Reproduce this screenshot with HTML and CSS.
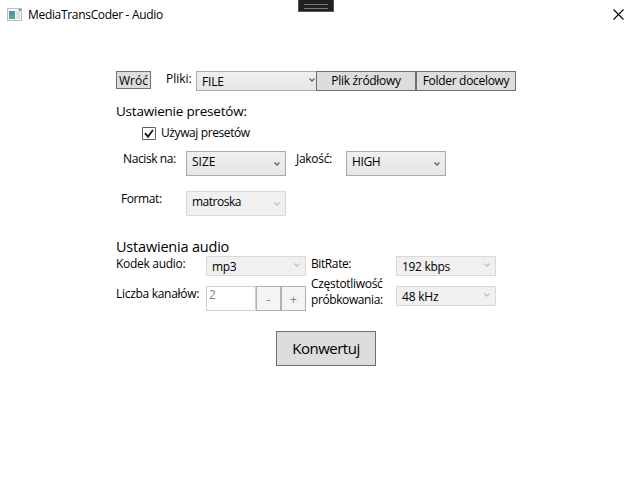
FILE: index.html
```html
<!DOCTYPE html>
<html lang="pl">
<head>
<meta charset="utf-8">
<title>MediaTransCoder - Audio</title>
<link rel="stylesheet" href="styles.css">
</head>
<body>
<header class="titlebar">
  <svg class="app-icon" width="15" height="13" viewBox="0 0 15 13"><defs><linearGradient id="g" x2="0.6" y2="1"><stop stop-color="#4c83b8"/><stop offset="1" stop-color="#5cae82"/></linearGradient></defs><path fill="#b9bec5" d="M0 0h15v13H0z"/><path fill="#f5f6f8" d="M1 2h13v10H1z"/><path fill="url(#g)" d="M2 3h6v8H2z"/><path fill="#dfe2e6" d="M9 3h4v8H9z"/><path fill="#f8f8f8" d="M1 1h10v1H1z"/><path fill="#63a58d" d="M12 1h2v2h-2z"/></svg>
  <span class="title">MediaTransCoder - Audio</span>
  <svg class="close" width="11" height="11" viewBox="0 0 11 11"><path d="M.5.5l10 10M10.5.5l-10 10" stroke="#000" stroke-width="1.1"/></svg>
  <div class="grip"></div>
</header>
<main class="form">
  <div class="row files">
    <button class="btn back"><span class="t-back">Wróć</span></button>
    <label class="label t-files">Pliki:</label>
    <div class="combo short file"><span class="t-file">FILE</span><svg class="chev" viewBox="0 0 6 4"><path d="M.5.5L3 3 5.5.5"/></svg></div>
    <button class="btn pick source"><span class="t-source">Plik źródłowy</span></button>
    <button class="btn pick"><span class="t-folder">Folder docelowy</span></button>
  </div>
  <h2 class="heading presets"><span class="t-presets">Ustawienie presetów:</span></h2>
  <div class="check-row">
    <svg class="check" width="14" height="13" viewBox="0 0 14 13"><path d="M.5.5h13v12H.5z" fill="#fff" stroke="#606060"/><path d="M3 6.2L6 9.6 11 3" fill="none" stroke="#212121" stroke-width="2"/></svg>
    <span class="t-use">Używaj presetów</span>
  </div>
  <div class="row preset-row">
    <label class="label focus-label"><span class="t-focus">Nacisk na:</span></label>
    <div class="combo"><span class="t-size">SIZE</span><svg class="chev" viewBox="0 0 6 4"><path d="M.5.5L3 3 5.5.5"/></svg></div>
    <label class="label quality-label"><span class="t-quality">Jakość:</span></label>
    <div class="combo"><span class="t-high">HIGH</span><svg class="chev" viewBox="0 0 6 4"><path d="M.5.5L3 3 5.5.5"/></svg></div>
  </div>
  <div class="row format-row">
    <label class="label format-label"><span class="t-format">Format:</span></label>
    <div class="combo off"><span class="t-matroska">matroska</span><svg class="chev" viewBox="0 0 6 4"><path d="M.5.5L3 3 5.5.5"/></svg></div>
  </div>
  <h2 class="heading audio"><span class="t-audio">Ustawienia audio</span></h2>
  <div class="audio-grid">
    <label class="label"><span class="t-codec">Kodek audio:</span></label>
    <div class="combo short off"><span class="t-mp3">mp3</span><svg class="chev" viewBox="0 0 6 4"><path d="M.5.5L3 3 5.5.5"/></svg></div>
    <label class="label second"><span class="t-bitrate">BitRate:</span></label>
    <div class="combo short off"><span class="t-kbps">192 kbps</span><svg class="chev" viewBox="0 0 6 4"><path d="M.5.5L3 3 5.5.5"/></svg></div>
    <label class="label channels"><span class="t-channels">Liczba kanałów:</span></label>
    <div class="stepper"><div class="value">2</div><button class="step">-</button><button class="step">+</button></div>
    <label class="label second"><span class="t-freq">Częstotliwość</span><br><span class="t-sampling">próbkowania:</span></label>
    <div class="combo short off rate"><span class="t-khz">48 kHz</span><svg class="chev" viewBox="0 0 6 4"><path d="M.5.5L3 3 5.5.5"/></svg></div>
  </div>
  <button class="btn convert"><span class="t-convert">Konwertuj</span></button>
</main>
</body>
</html>
```
FILE: styles.css
```css
* { box-sizing: border-box; }
body { margin: 0; background: #fff; color: #000; font: 12px/16px "Open Sans", sans-serif; width: 632px; height: 491px; overflow: hidden; white-space: nowrap; }
button { font: inherit; color: inherit; padding: 0; border-radius: 0; }
.titlebar { position: relative; display: flex; height: 30px; padding-left: 7px; }
.app-icon { margin-top: 8px; }
.title { margin: 7px 0 0 6px; letter-spacing: -0.32px; }
.close { margin: 9px 8px 0 auto; }
.grip { position: absolute; left: 298px; top: 0; width: 36px; height: 12px; background: #1f1f20; border: 1px solid #555; border-top: 0; }
.grip::before { content: ""; display: block; margin: 4px 5px 0; height: 3px; border: solid #777; border-width: 1px 0; }
.form { width: 400px; margin: 41px 0 0 116px; }
.row { display: flex; align-items: flex-start; }
.files { height: 20px; }
.btn { background: #ddd; border: 1px solid #707070; line-height: 16px; display: flex; justify-content: center; align-items: flex-start; }
.back { width: 35px; height: 18px; padding-top: 1px; }
.files .label { width: 45px; padding-left: 15px; }
.label { line-height: 16px; }
.combo { position: relative; display: flex; justify-content: space-between; align-items: flex-start; width: 100px; height: 25px; padding: 1px 5px 0; border: 1px solid #acacac; background: linear-gradient(#f0f0f0, #e5e5e5); }
.combo > span { margin-top: 1px; }
.combo.off { border-color: #d9d9d9; background: #f0f0f0; }
.chev { width: 6px; height: 4px; margin-top: 9px; flex: none; fill: none; stroke: #606060; stroke-width: 1.3; }
.off .chev { stroke: #bfbfbf; }
.short { height: 20px; }
.short .chev { margin-top: 5px; }
.file { width: 121px; margin-right: -1px; padding-right: 1px; }
.pick { position: relative; width: 100px; height: 20px; padding-top: 1px; }
.heading { margin: 0; font-weight: 400; }
.presets { font-size: 13.5px; line-height: 20px; margin-top: 10px; letter-spacing: -0.22px; }
.check-row { display: flex; height: 24px; margin-top: 3px; padding-left: 26px; }
.check { margin: 3px 5px 0 0; }
.check-row span { margin-top: 1px; }
.preset-row { margin-top: 3px; height: 40px; }
.focus-label { width: 70px; padding-left: 7px; }
.quality-label { width: 60px; padding-left: 10px; }
.format-row { height: 40px; }
.format-label { width: 70px; padding-left: 5px; }
.audio { margin-top: 6px; height: 19px; font-size: 14.5px; line-height: 20px; letter-spacing: -0.2px; }
.audio-grid { display: grid; grid-template-columns: 90px 100px 90px 100px; grid-template-rows: 20px 35px; align-items: start; }
.second { padding-left: 5px; }
.channels, .stepper, .rate { margin-top: 10px; }
.stepper { display: flex; height: 25px; }
.value { width: 50px; padding: 0 2px; border: 1px solid #ccced2; color: #838383; }
.step { width: 25px; padding-top: 2px; background: #f4f4f4; border: 1px solid #adb2b5; color: #838383; }
.convert { margin: 20px 0 0 160px; width: 100px; height: 35px; font-size: 15px; line-height: 33px; letter-spacing: -0.5px; }
.t-file, .t-khz { letter-spacing: -0.2px; }
.t-source, .t-folder, .t-quality, .t-kbps, .t-channels, .t-freq, .t-codec { letter-spacing: -0.3px; }
.t-use, .t-focus, .t-high, .t-format, .t-mp3, .t-bitrate, .t-sampling { letter-spacing: -0.4px; }
.t-matroska { letter-spacing: -0.5px; }
```
